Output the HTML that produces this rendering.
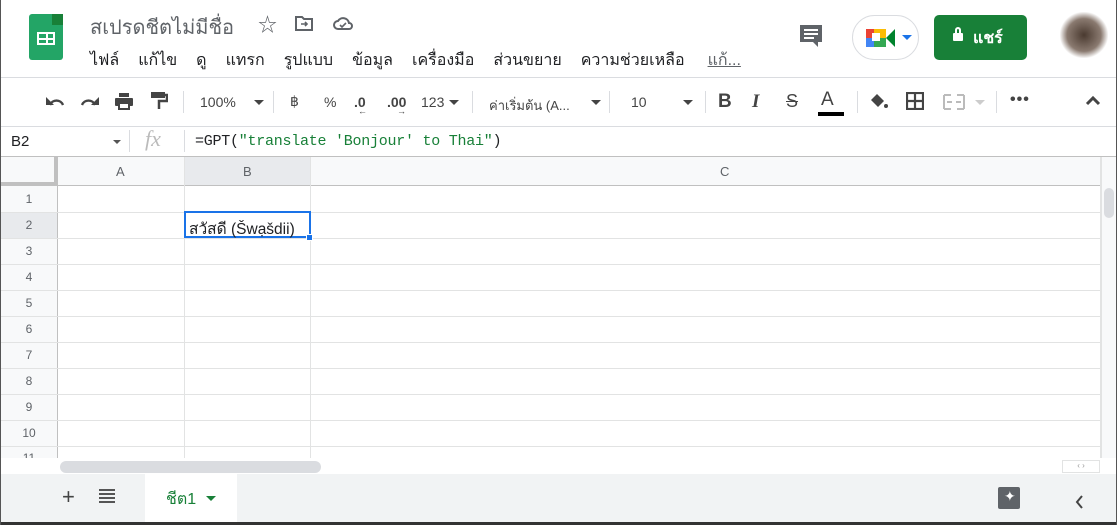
<!DOCTYPE html>
<html><head><meta charset="utf-8"><style>
*{margin:0;padding:0;box-sizing:border-box}
body{width:1117px;height:525px;overflow:hidden;background:#fff;font-family:"Liberation Sans","Noto Sans CJK SC",sans-serif;position:relative;color:#202124}
.a{position:absolute}
.menu span{margin-right:19px}
.tb{color:#444;font-size:14px}
.sep{position:absolute;width:1px;height:22px;background:#dadce0;top:91px}
.hl{position:absolute;left:0;width:1101px;height:1px;background:#e2e3e3}
.rn{position:absolute;left:0;width:58px;text-align:center;font-size:12px;color:#5f6368}
</style></head><body>
<div class="a" style="left:29px;top:14px;width:34px;height:46px;background:#23a566;border-radius:3px"></div>
<div class="a" style="left:52px;top:14px;width:11px;height:11px;background:#188038"></div>
<div class="a" style="left:37px;top:32px;width:18px;height:13px;border:2px solid #fff;background:linear-gradient(#fff,#fff) 7px 0/2px 100% no-repeat,linear-gradient(#fff,#fff) 0 4px/100% 2px no-repeat"></div>
<div class="a" style="left:90px;top:11px;font-size:20px;color:#5f6368">สเปรดชีตไม่มีชื่อ</div>
<div class="a" style="left:258px;top:10px;font-size:19px;color:#5f6368">☆</div>
<svg class="a" style="left:294px;top:14px" width="20" height="18"><path d="M2 3h6l2 2h8v11H2z" fill="none" stroke="#5f6368" stroke-width="2"/><path d="M7 10h6M11 8l2 2-2 2" stroke="#5f6368" stroke-width="1.6" fill="none"/></svg>
<svg class="a" style="left:332px;top:14px" width="22" height="18"><path d="M6 15a4 4 0 0 1 0-8 6 6 0 0 1 11 2 3 3 0 0 1 0 6z" fill="none" stroke="#5f6368" stroke-width="2"/><path d="M8 11l2 2 4-4" stroke="#5f6368" stroke-width="1.6" fill="none"/></svg>
<div class="a menu" style="left:90px;top:48px;font-size:16px;color:#202124;white-space:nowrap"><span>ไฟล์</span><span>แก้ไข</span><span>ดู</span><span>แทรก</span><span>รูปแบบ</span><span>ข้อมูล</span><span>เครื่องมือ</span><span>ส่วนขยาย</span><span>ความช่วยเหลือ</span><span style="color:#5f6368;text-decoration:underline;margin-left:4px">แก้...</span></div>
<svg class="a" style="left:798px;top:23px" width="28" height="26"><path d="M2 2h22v17h-4v5l-5-5H2z" fill="#5f6368"/><path d="M6 7h14M6 11h14M6 15h10" stroke="#fff" stroke-width="2"/></svg>
<div class="a" style="left:852px;top:15px;width:67px;height:45px;border:1px solid #dadce0;border-radius:23px"></div>
<div class="a" style="left:866px;top:29px;width:8px;height:9px;background:#ea4335"></div>
<div class="a" style="left:874px;top:29px;width:12px;height:9px;background:#fbbc04"></div>
<div class="a" style="left:866px;top:38px;width:8px;height:9px;background:#4285f4"></div>
<div class="a" style="left:874px;top:38px;width:12px;height:9px;background:#34a853"></div>
<div class="a" style="left:872px;top:33px;width:8px;height:8px;background:#fff"></div>
<div class="a" style="left:886px;top:29px;width:0;height:0;border-top:9px solid transparent;border-bottom:9px solid transparent;border-right:9px solid #00832d"></div>
<div class="a" style="left:902px;top:35px;border-left:5px solid transparent;border-right:5px solid transparent;border-top:5px solid #1a73e8"></div>
<div class="a" style="left:934px;top:15px;width:93px;height:45px;background:#188038;border-radius:5px;color:#fff;font-size:16px;font-weight:bold;padding:11px 0 0 39px">แชร์</div>
<div class="a" style="left:953px;top:33px;width:10px;height:8px;background:#fff;border-radius:1px"></div>
<div class="a" style="left:955px;top:27px;width:6px;height:8px;border:2px solid #fff;border-radius:3px 3px 0 0;border-bottom:none"></div>
<div class="a" style="left:1060px;top:12px;width:48px;height:46px;background:radial-gradient(#4a3a30,#8a7a70 50%,transparent 72%)"></div>
<div class="a" style="left:0;top:77px;width:1117px;height:1px;background:#dadce0"></div>
<svg class="a" style="left:45px;top:93px" width="20" height="16"><path d="M5 12a7 7 0 0 1 13 0" fill="none" stroke="#444" stroke-width="2.4"/><path d="M1 4v8h8z" fill="#444"/></svg>
<svg class="a" style="left:80px;top:93px" width="20" height="16"><path d="M15 12a7 7 0 0 0-13 0" fill="none" stroke="#444" stroke-width="2.4"/><path d="M19 4v8h-8z" fill="#444"/></svg>
<svg class="a" style="left:114px;top:91px" width="20" height="20"><rect x="5" y="2" width="10" height="4" fill="#444"/><rect x="1" y="7" width="18" height="8" rx="1" fill="#444"/><rect x="5" y="12" width="10" height="6" fill="#fff" stroke="#444" stroke-width="2"/></svg>
<svg class="a" style="left:150px;top:91px" width="18" height="20"><rect x="1" y="1" width="14" height="6" fill="#444"/><path d="M15 4h2v6H9v8" fill="none" stroke="#444" stroke-width="2.5"/></svg>
<div class="sep" style="left:183px"></div>
<div class="a tb" style="left:200px;top:94px">100%</div>
<div class="a" style="left:254px;top:100px;border-left:5px solid transparent;border-right:5px solid transparent;border-top:5px solid #444"></div>
<div class="sep" style="left:273px"></div>
<div class="a tb" style="left:290px;top:93px">฿</div>
<div class="a tb" style="left:324px;top:94px">%</div>
<div class="a tb" style="left:354px;top:94px;font-weight:bold">.0<span style="font-size:9px;position:absolute;left:4px;top:12px">←</span></div>
<div class="a tb" style="left:387px;top:94px;font-weight:bold">.00<span style="font-size:9px;position:absolute;left:10px;top:12px">→</span></div>
<div class="a tb" style="left:421px;top:94px">123</div>
<div class="a" style="left:449px;top:100px;border-left:5px solid transparent;border-right:5px solid transparent;border-top:5px solid #444"></div>
<div class="sep" style="left:472px"></div>
<div class="a" style="left:489px;top:95px;font-size:13px;color:#444">ค่าเริ่มต้น (A...</div>
<div class="a" style="left:591px;top:100px;border-left:5px solid transparent;border-right:5px solid transparent;border-top:5px solid #444"></div>
<div class="sep" style="left:609px"></div>
<div class="a tb" style="left:631px;top:94px">10</div>
<div class="a" style="left:683px;top:100px;border-left:5px solid transparent;border-right:5px solid transparent;border-top:5px solid #444"></div>
<div class="sep" style="left:705px"></div>
<div class="a" style="left:718px;top:91px;font-size:19px;font-weight:bold;color:#444">B</div>
<div class="a" style="left:752px;top:91px;font-size:19px;font-style:italic;font-family:'Liberation Serif',serif;font-weight:bold;color:#444">I</div>
<div class="a" style="left:786px;top:91px;font-size:18px;color:#444;text-decoration:line-through">S</div>
<div class="a" style="left:821px;top:89px;font-size:19px;color:#444">A</div>
<div class="a" style="left:818px;top:112px;width:26px;height:4px;background:#000"></div>
<div class="sep" style="left:857px"></div>
<svg class="a" style="left:868px;top:92px" width="22" height="18"><path d="M3 8l6-6 7 7-6 6z" fill="#444"/><circle cx="18" cy="14" r="2" fill="#444"/></svg>
<svg class="a" style="left:906px;top:92px" width="18" height="18"><rect x="1" y="1" width="16" height="16" fill="none" stroke="#444" stroke-width="2.2"/><path d="M9 1v16M1 9h16" stroke="#444" stroke-width="2.2"/></svg>
<svg class="a" style="left:943px;top:93px" width="22" height="18"><path d="M1 2h7M14 2h7M1 16h7M14 16h7M1 2v14M21 2v14M4 9h5M13 9h5" stroke="#bbb" stroke-width="2" fill="none"/></svg>
<div class="a" style="left:975px;top:100px;border-left:5px solid transparent;border-right:5px solid transparent;border-top:5px solid #ccc"></div>
<div class="sep" style="left:996px"></div>
<div class="a" style="left:1010px;top:91px;font-size:16px;color:#444;font-weight:bold;letter-spacing:1px">•••</div>
<svg class="a" style="left:1085px;top:94px" width="16" height="12"><path d="M2 10l6-6 6 6" fill="none" stroke="#444" stroke-width="3"/></svg>
<div class="a" style="left:0;top:126px;width:1117px;height:1px;background:#dadce0"></div>
<div class="a" style="left:11px;top:133px;font-size:15px">B2</div>
<div class="a" style="left:113px;top:140px;border-left:4px solid transparent;border-right:4px solid transparent;border-top:4px solid #555"></div>
<div class="a" style="left:129px;top:130px;width:1px;height:22px;background:#dadce0"></div>
<div class="a" style="left:145px;top:126px;font-size:22px;font-style:italic;font-family:'Liberation Serif',serif;color:#bbb">fx</div>
<div class="a" style="left:184px;top:130px;width:1px;height:22px;background:#dadce0"></div>
<div class="a" style="left:195px;top:133px;font-size:15px;font-family:'Liberation Mono',monospace;letter-spacing:-0.25px">=GPT(<span style="color:#188038">"translate 'Bonjour' to Thai"</span>)</div>
<div class="a" style="left:0;top:156px;width:1117px;height:1px;background:#c0c0c0"></div>
<div class="a" style="left:0;top:157px;width:1101px;height:29px;background:#f8f9fa"></div>
<div class="a" style="left:0;top:186px;width:58px;height:272px;background:#f8f9fa"></div>
<div class="a" style="left:184px;top:157px;width:126px;height:29px;background:#e8eaed"></div>
<div class="a" style="left:0;top:212px;width:58px;height:26px;background:#e8eaed"></div>
<div class="a" style="left:0;top:182px;width:58px;height:4px;background:#c0c0c0"></div>
<div class="a" style="left:54px;top:157px;width:4px;height:29px;background:#c0c0c0"></div>
<div class="a" style="left:58px;top:185px;width:1043px;height:1px;background:#c0c0c0"></div>
<div class="a" style="left:57px;top:186px;width:1px;height:272px;background:#c0c0c0"></div>
<div class="a" style="left:184px;top:157px;width:1px;height:301px;background:#e2e3e3"></div>
<div class="a" style="left:310px;top:157px;width:1px;height:301px;background:#e2e3e3"></div>
<div class="a" style="left:1100px;top:157px;width:1px;height:301px;background:#e2e3e3"></div>
<div class="a" style="left:116px;top:164px;font-size:13px;color:#5f6368">A</div>
<div class="a" style="left:243px;top:164px;font-size:13px;color:#5f6368">B</div>
<div class="a" style="left:720px;top:164px;font-size:13px;color:#5f6368">C</div>
<div class="hl" style="top:212px"></div><div class="hl" style="top:238px"></div><div class="hl" style="top:264px"></div><div class="hl" style="top:290px"></div><div class="hl" style="top:316px"></div><div class="hl" style="top:342px"></div><div class="hl" style="top:368px"></div><div class="hl" style="top:394px"></div><div class="hl" style="top:420px"></div><div class="hl" style="top:446px"></div>
<div class="rn" style="top:192px">1</div><div class="rn" style="top:218px">2</div><div class="rn" style="top:244px">3</div><div class="rn" style="top:270px">4</div><div class="rn" style="top:296px">5</div><div class="rn" style="top:322px">6</div><div class="rn" style="top:348px">7</div><div class="rn" style="top:374px">8</div><div class="rn" style="top:400px">9</div><div class="rn" style="top:426px">10</div><div class="rn" style="top:451px">11</div>
<div class="a" style="left:184px;top:211px;width:127px;height:27px;border:2px solid #1a73e8"></div>
<div class="a" style="left:306px;top:234px;width:7px;height:7px;background:#1a73e8;border:1px solid #fff"></div>
<div class="a" style="left:189px;top:216px;font-size:15.5px">สวัสดี (Šwạšdii)</div>
<div class="a" style="left:1101px;top:157px;width:16px;height:301px;background:#f8f9fa;border-left:1px solid #e2e3e3"></div>
<div class="a" style="left:1104px;top:188px;width:10px;height:30px;background:#dadce0;border-radius:5px"></div>
<div class="a" style="left:0;top:458px;width:1117px;height:16px;background:#fff"></div>
<div class="a" style="left:60px;top:461px;width:261px;height:12px;background:#dadce0;border-radius:6px"></div>
<div class="a" style="left:1062px;top:460px;width:38px;height:13px;border:1px solid #e2e3e3;font-size:8px;color:#999;text-align:center">‹ ›</div>
<div class="a" style="left:0;top:474px;width:1117px;height:51px;background:#f1f3f4"></div>
<div class="a" style="left:62px;top:484px;font-size:22px;color:#444">+</div>
<svg class="a" style="left:99px;top:489px" width="16" height="14"><path d="M0 1h16M0 5h16M0 9h16M0 13h16" stroke="#555" stroke-width="2"/></svg>
<div class="a" style="left:145px;top:474px;width:92px;height:48px;background:#fff"></div>
<div class="a" style="left:166px;top:487px;font-size:16px;color:#188038">ชีต1</div>
<div class="a" style="left:206px;top:496px;border-left:5px solid transparent;border-right:5px solid transparent;border-top:5px solid #188038"></div>
<div class="a" style="left:998px;top:487px;width:22px;height:22px;background:#5f6368;border-radius:2px"></div>
<div class="a" style="left:1004px;top:488px;color:#fff;font-size:14px">✦</div>
<svg class="a" style="left:1074px;top:494px" width="10" height="16"><path d="M8 2l-5 6 5 6" fill="none" stroke="#444" stroke-width="2"/></svg>
<div class="a" style="left:0;top:522px;width:1117px;height:3px;background:#333"></div>
<div class="a" style="left:0;top:0;width:1px;height:525px;background:#555"></div>
<div class="a" style="left:1116px;top:0;width:1px;height:525px;background:#555"></div>
</body></html>
